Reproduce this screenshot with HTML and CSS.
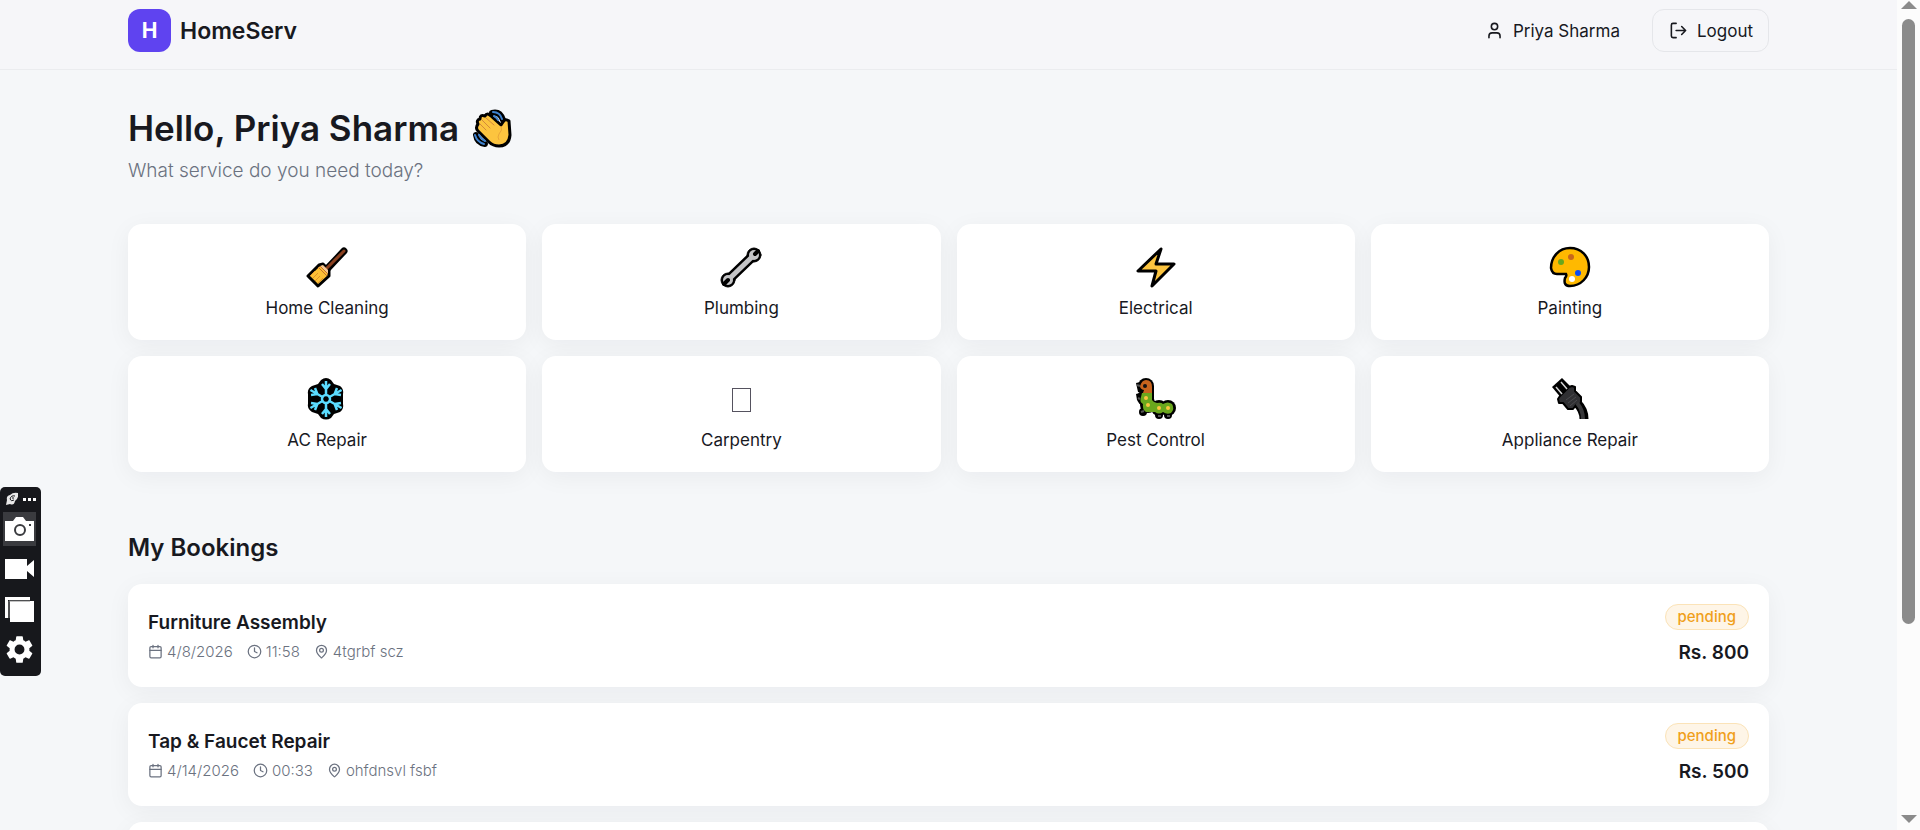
FILE: index.html
```
<!DOCTYPE html>
<html lang="en">
<head>
    <meta charset="UTF-8">
    <meta name="viewport" content="width=device-width, initial-scale=1.0">
    <title>HomeServ - Dashboard</title>
    <link rel="stylesheet" href="styles.css">
</head>
<body>
    <!-- Shared line icons -->
    <svg class="sprite" aria-hidden="true">
        <symbol id="icon-calendar" viewBox="0 0 24 24">
            <path d="M8 2v4M16 2v4M3 10h18"/>
            <rect x="3" y="4" width="18" height="18" rx="2"/>
        </symbol>
        <symbol id="icon-clock" viewBox="0 0 24 24">
            <circle cx="12" cy="12" r="10"/>
            <path d="M12 6v6l4 2"/>
        </symbol>
        <symbol id="icon-pin" viewBox="0 0 24 24">
            <path d="M20 10c0 5-5.500 10.200-7.400 11.800a1 1 0 0 1-1.200 0C9.500 20.200 4 15 4 10a8 8 0 0 1 16 0"/>
            <circle cx="12" cy="10" r="3"/>
        </symbol>
    </svg>

    <div class="page">
        <header class="header">
            <a href="#" class="brand">
                <span class="brand-logo">H</span>
                <span class="brand-name">HomeServ</span>
            </a>
            <div class="user-nav">
                <a href="#" class="user-link">
                    <svg class="nav-icon" viewBox="0 0 24 24"><path d="M19 21v-2a4 4 0 0 0-4-4H9a4 4 0 0 0-4 4v2"/><circle cx="12" cy="7" r="4"/></svg>
                    Priya Sharma
                </a>
                <button type="button" class="btn-logout">
                    <svg class="nav-icon" viewBox="0 0 24 24"><path d="M9 21H5a2 2 0 0 1-2-2V5a2 2 0 0 1 2-2h4M16 17l5-5-5-5M21 12H9"/></svg>
                    Logout
                </button>
            </div>
        </header>

        <main class="container">
            <h1>
                Hello, Priya Sharma
                <svg class="wave" viewBox="0 0 40 40" role="img" aria-label="waving hand">
                    <path d="M19 5Q27 3 30 12M3 27Q4 35 12 36" fill="none" stroke="#000" stroke-width="6" stroke-linecap="round"/>
                    <path d="M5 16Q3 12 7 11Q7 6 12 8Q14 4 18 8L28 17L30 14Q32 10 36 13L37 27Q36 38 26 38Q20 38 16 34L5 23Q2 20 5 16Z" fill="#fcc43f" stroke="#000" stroke-width="3" stroke-linejoin="round"/>
                    <path d="M7 16L13 22M9 12L17 20M13 10L21 17" fill="none" stroke="#d4883b" stroke-width="1" stroke-linecap="round"/>
                    <path d="M28 18Q30 22 26 26Q24 29 26 32" fill="none" stroke="#e9a538" stroke-width="1"/>
                    <path d="M20 4Q27 4 29 11M21 8Q24 9 25 12M2 27Q4 34 11 36M6 27Q8 31 12 33" fill="none" stroke="#3e82cf" stroke-width="2" stroke-linecap="round"/>
                </svg>
            </h1>
            <p class="subtitle">What service do you need today?</p>

            <div class="services">
                <button type="button" class="service-card">
                    <svg class="service-icon" viewBox="0 0 42 42">
                        <path d="M38 5L21 23" stroke="#000" stroke-width="7" stroke-linecap="round"/>
                        <path d="M13 19L17 18L23 24L23 30L12 40L2 30Z" fill="#fcbf35" stroke="#000" stroke-width="3" stroke-linejoin="round"/>
                        <path d="M38 5L21 22" stroke="#8a4020" stroke-width="3" stroke-linecap="round"/>
                        <path d="M14 20L17 19L22 24L22 28Z" fill="#f6c993"/>
                        <path d="M12 21L21 30M14 20L22 28" stroke="#c5702d" stroke-width="1"/>
                        <path d="M9 25L4 30M12 27L7 32M14 30L9 35M17 32L12 37" stroke="#e0922a" stroke-width="1"/>
                    </svg>
                    <span>Home Cleaning</span>
                </button>
                <button type="button" class="service-card">
                    <svg class="service-icon" viewBox="0 0 42 42">
                        <g stroke="#000" stroke-linecap="round">
                            <circle cx="34" cy="9" r="7" fill="#000"/>
                            <circle cx="8" cy="34" r="7" fill="#000"/>
                            <path d="M33 10L9 33" stroke-width="10"/>
                        </g>
                        <circle cx="34" cy="9" r="5" fill="#c4c4c6"/>
                        <circle cx="8" cy="34" r="5" fill="#c4c4c6"/>
                        <path d="M33 10L9 33" stroke="#c4c4c6" stroke-width="5"/>
                        <path d="M38 5L35 8M4 38L8 34" stroke="#000" stroke-width="4" stroke-linecap="round"/>
                    </svg>
                    <span>Plumbing</span>
                </button>
                <button type="button" class="service-card">
                    <svg class="service-icon" viewBox="0 0 42 42">
                        <path d="M26 3L3 25H21L17 40L39 18H21Z" fill="#fcc43f" stroke="#000" stroke-width="3" stroke-linejoin="round"/>
                    </svg>
                    <span>Electrical</span>
                </button>
                <button type="button" class="service-card">
                    <svg class="service-icon" viewBox="0 0 42 42">
                        <path d="M21 2C10 2 2 11 2 22Q3 28 8 28H17Q18 30 16 32Q14 40 21 40C32 40 40 31 40 21C40 10 32 2 21 2Z" fill="#ffb900" stroke="#000" stroke-width="2.500"/>
                        <circle cx="22" cy="11" r="3" fill="#c8681c"/>
                        <circle cx="12" cy="16" r="3" fill="#6aa71d"/>
                        <circle cx="29" cy="27" r="3" fill="#0a4cf5"/>
                        <circle cx="23" cy="33" r="3" fill="#fff"/>
                    </svg>
                    <span>Painting</span>
                </button>
                <button type="button" class="service-card">
                    <svg class="service-icon" viewBox="0 0 42 42">
                        <path d="M15 2Q20 -2 25 2L28 6L34 8Q38 11 37 16V26Q38 31 34 34L28 36L25 40Q20 43 15 40L12 36L6 34Q1 31 2 26V16Q1 11 6 8L12 6Z" fill="#000"/>
                        <g fill="none" stroke="#5bdcff" stroke-width="2.500">
                            <path id="flake-arm" d="M20 18V3M16 6L20 11L24 6"/>
                            <use href="#flake-arm" transform="rotate(60 20 21)"/>
                            <use href="#flake-arm" transform="rotate(120 20 21)"/>
                            <use href="#flake-arm" transform="rotate(180 20 21)"/>
                            <use href="#flake-arm" transform="rotate(240 20 21)"/>
                            <use href="#flake-arm" transform="rotate(300 20 21)"/>
                            <circle cx="20" cy="21" r="4"/>
                        </g>
                    </svg>
                    <span>AC Repair</span>
                </button>
                <button type="button" class="service-card">
                    <svg class="service-icon" viewBox="0 0 42 42">
                        <rect x="12.500" y="10.500" width="18" height="23" fill="none" stroke="#55525f"/>
                    </svg>
                    <span>Carpentry</span>
                </button>
                <button type="button" class="service-card">
                    <svg class="service-icon" viewBox="0 0 42 42">
                        <g fill="#000">
                            <circle cx="11" cy="8" r="8"/>
                            <path d="M1 5L10 3V14H3ZM11 8H19V24H11ZM1 16L8 14V26L2 22Z"/>
                            <circle cx="10" cy="20" r="8"/>
                            <circle cx="13" cy="27" r="8"/>
                            <circle cx="24" cy="30" r="8"/>
                            <circle cx="33" cy="30" r="8"/>
                            <circle cx="8" cy="34" r="4"/>
                            <circle cx="24" cy="37" r="4"/>
                            <circle cx="33" cy="37" r="4"/>
                        </g>
                        <path d="M11 2Q17 2 17 9V15H8L9 12Q5 11 5 8Q7 2 11 2Z" fill="#c8641d"/>
                        <path d="M7 15H17V22Q19 25 22 25Q26 24 28 26Q33 23 37 26Q40 31 36 35Q32 37 28 34Q24 37 20 34H11Q7 31 8 26Q4 24 6 19Z" fill="#6aa71d"/>
                        <circle cx="10" cy="8" r="2" fill="#111"/>
                        <path d="M2 7L5 8M3 20L5 21M6 34L9 33M23 38H26M32 38H35" stroke="#555" stroke-width="2"/>
                        <g fill="#fcc43f">
                            <circle cx="11" cy="20" r="2"/>
                            <circle cx="13" cy="27" r="2"/>
                            <circle cx="24" cy="30" r="2"/>
                            <circle cx="33" cy="30" r="2"/>
                        </g>
                    </svg>
                    <span>Pest Control</span>
                </button>
                <button type="button" class="service-card">
                    <svg class="service-icon" viewBox="0 0 42 42">
                        <path d="M28 25Q35 32 35 41" fill="none" stroke="#000" stroke-width="9"/>
                        <path d="M13 0L3 9L13 21L23 10Z" fill="#000"/>
                        <path d="M20 9L23 8L26 9V13L32 19V25L27 27L24 31H19L14 25H10L9 21L11 18Z" fill="#303033" stroke="#000" stroke-width="2" stroke-linejoin="round"/>
                        <path d="M28 25Q34 32 34 41" fill="none" stroke="#38383a" stroke-width="4"/>
                        <path d="M12 4L18 11M7 9L13 16" stroke="#d4d4d4" stroke-width="1.500"/>
                        <path d="M17 22L25 16M19 25L27 19M21 28L28 22" stroke="#4b4b4e" stroke-width="1"/>
                    </svg>
                    <span>Appliance Repair</span>
                </button>
            </div>

            <h2>My Bookings</h2>
            <div class="bookings">
                <article class="booking-card">
                    <div class="booking-info">
                        <h3>Furniture Assembly</h3>
                        <div class="booking-meta">
                            <span><svg><use href="#icon-calendar"/></svg>4/8/2026</span>
                            <span><svg><use href="#icon-clock"/></svg>11:58</span>
                            <span><svg><use href="#icon-pin"/></svg>4tgrbf scz</span>
                        </div>
                    </div>
                    <div class="booking-side">
                        <span class="badge">pending</span>
                        <span class="price">Rs. 800</span>
                    </div>
                </article>
                <article class="booking-card">
                    <div class="booking-info">
                        <h3>Tap &amp; Faucet Repair</h3>
                        <div class="booking-meta">
                            <span><svg><use href="#icon-calendar"/></svg>4/14/2026</span>
                            <span><svg><use href="#icon-clock"/></svg>00:33</span>
                            <span><svg><use href="#icon-pin"/></svg>ohfdnsvl fsbf</span>
                        </div>
                    </div>
                    <div class="booking-side">
                        <span class="badge">pending</span>
                        <span class="price">Rs. 500</span>
                    </div>
                </article>
                <article class="booking-card booking-next"></article>
            </div>
        </main>
    </div>

    <div class="scrollbar" aria-hidden="true">
        <span class="arrow arrow-up"></span>
        <span class="track"><span class="thumb"></span></span>
        <span class="arrow arrow-down"></span>
    </div>

    <!-- Floating capture toolbar -->
    <aside class="toolbar">
        <div class="toolbar-top">
            <svg width="12" height="14" viewBox="0 0 12 14"><path d="M12 1Q7 0 4 3Q0 4 1 8L0 13L4 12Q8 14 9 9Q13 6 12 1Z" fill="#e8e8e8"/><path d="M9 4Q5 3 4 7Q5 10 8 8M6 6H8" fill="none" stroke="#17181c"/></svg>
            <svg width="13" height="4" viewBox="0 0 13 4"><path d="M0 1H3V4H0ZM5 1H8V4H5ZM10 1H13V4H10Z" fill="#fff"/></svg>
        </div>
        <button type="button" class="tool active" aria-label="Screenshot">
            <svg width="29" height="24" viewBox="0 0 29 24"><path d="M0 4H8L11 0H18L21 4H29V24H0Z" fill="#fff"/><circle cx="15" cy="13" r="5" fill="#fff" stroke="#3a3b3f" stroke-width="2"/><path d="M24 7H26V9H24Z" fill="#3a3b3f"/></svg>
        </button>
        <button type="button" class="tool" aria-label="Record video">
            <svg width="29" height="20" viewBox="0 0 29 20"><path d="M0 0H22V7L29 1V18L22 12V20H0Z" fill="#fff"/></svg>
        </button>
        <button type="button" class="tool" aria-label="Gallery">
            <svg width="29" height="25" viewBox="0 0 29 25"><path d="M0 0H25V3H3V21H0ZM5 4H29V25H5Z" fill="#fff"/><path d="M4 21V4H25" fill="none" stroke="#888"/></svg>
        </button>
        <button type="button" class="tool" aria-label="Settings">
            <svg width="35" height="35" viewBox="0 0 24 24"><path fill="#fff" d="M19.140 12.940c.04-.3.06-.61.06-.94 0-.32-.02-.64-.07-.94l2.030-1.580c.18-.14.23-.41.12-.61l-1.920-3.320c-.12-.22-.37-.29-.59-.22l-2.390.96c-.5-.38-1.030-.7-1.620-.94l-.36-2.540c-.04-.24-.24-.41-.48-.41h-3.840c-.24 0-.43.17-.47.41l-.36 2.540c-.59.24-1.130.57-1.620.94l-2.390-.96c-.22-.08-.47 0-.59.22L2.740 8.870c-.12.21-.08.47.12.61l2.030 1.580c-.05.3-.09.63-.09.94s.02.64.07.94l-2.030 1.580c-.18.14-.23.41-.12.61l1.920 3.320c.12.22.37.29.59.22l2.390-.96c.5.38 1.030.7 1.620.94l.36 2.540c.05.24.24.41.48.41h3.840c.24 0 .44-.17.47-.41l.36-2.540c.59-.24 1.130-.56 1.620-.94l2.390.96c.22.08.47 0 .59-.22l1.920-3.320c.12-.22.07-.47-.12-.61zM12 15.600a3.600 3.600 0 1 1 0-7.200 3.600 3.600 0 0 1 0 7.200z"/></svg>
        </button>
    </aside>
</body>
</html>
```

FILE: styles.css
```
* {
    margin: 0;
    padding: 0;
    box-sizing: border-box;
}

body {
    display: flex;
    height: 100vh;
    overflow: hidden;
    font-family: 'Inter', sans-serif;
    font-size: 17px;
    color: #18191f;
    background: #f5f7f9;
}

a {
    color: inherit;
    text-decoration: none;
}

button {
    font: inherit;
    color: inherit;
    border: none;
    background: none;
    cursor: pointer;
}

.sprite {
    position: absolute;
    width: 0;
    height: 0;
}

.page {
    flex: 1;
    min-width: 0;
    overflow: hidden;
}

/* Header */
.header {
    display: flex;
    align-items: center;
    justify-content: space-between;
    padding: 9px 128px 17px;
    background: #f6f6f9;
    border-bottom: 1px solid #ebecef;
}

.brand {
    display: flex;
    align-items: center;
    gap: 9px;
}

.brand-logo {
    display: flex;
    align-items: center;
    justify-content: center;
    width: 43px;
    height: 43px;
    border-radius: 12px;
    background: #5f43f0;
    color: white;
    font-size: 21px;
    font-weight: 700;
}

.brand-name {
    font-size: 23px;
    font-weight: 600;
}

.user-nav {
    display: flex;
    align-items: center;
    gap: 32px;
}

.user-link,
.btn-logout {
    display: flex;
    align-items: center;
    gap: 9px;
    line-height: 24px;
}

.btn-logout {
    height: 43px;
    padding: 0 15px 0 16px;
    border: 1px solid #e5e6ea;
    border-radius: 12px;
}

.nav-icon {
    width: 19px;
    height: 19px;
    fill: none;
    stroke: currentColor;
    stroke-width: 2;
    stroke-linecap: round;
    stroke-linejoin: round;
}

/* Content */
.container {
    padding: 36px 128px;
}

h1 {
    display: flex;
    align-items: center;
    gap: 14px;
    font-size: 35px;
    line-height: 44px;
    font-weight: 600;
}

.wave {
    width: 40px;
    height: 40px;
}

.subtitle {
    margin: 6px 0 38px;
    font-size: 19px;
    line-height: 30px;
    font-weight: 300;
    color: #6b7280;
}

.services {
    display: grid;
    grid-template-columns: repeat(4, 1fr);
    gap: 16px;
}

.service-card,
.booking-card {
    background: white;
    border-radius: 14px;
    box-shadow: 0 5px 25px rgba(20, 22, 40, 0.05);
}

.service-card {
    display: flex;
    flex-direction: column;
    align-items: center;
    gap: 8px;
    padding: 22px 20px 20px;
    line-height: 24px;
}

.service-icon {
    width: 42px;
    height: 42px;
    fill: none;
}

h2 {
    margin: 60px 0 20px;
    font-size: 24px;
    line-height: 32px;
    font-weight: 600;
}

/* Bookings */
.bookings {
    display: flex;
    flex-direction: column;
    gap: 16px;
}

.booking-card {
    display: flex;
    align-items: center;
    justify-content: space-between;
    padding: 20px;
}

.booking-next {
    min-height: 103px;
}

h3,
.price {
    font-size: 19px;
    line-height: 28px;
    font-weight: 600;
}

.booking-meta {
    display: flex;
    gap: 14px;
    margin-top: 4px;
    font-size: 15px;
    line-height: 22px;
    font-weight: 300;
    color: #6b7280;
}

.booking-meta span {
    display: flex;
    align-items: center;
    gap: 4px;
}

.booking-meta svg {
    width: 15px;
    height: 15px;
    fill: none;
    stroke: currentColor;
    stroke-width: 2;
    stroke-linecap: round;
    stroke-linejoin: round;
}

.booking-side {
    display: flex;
    flex-direction: column;
    align-items: flex-end;
    gap: 9px;
}

.badge {
    padding: 0 12px;
    border: 1px solid #fbe3b8;
    border-radius: 13px;
    background: #fef5e7;
    color: #f0a01c;
    font-size: 15px;
    line-height: 24px;
    font-weight: 500;
}

/* Scrollbar */
.scrollbar {
    display: flex;
    flex-direction: column;
    align-items: center;
    width: 23px;
    padding: 1px 0 7px;
    background: #fcfcfc;
}

.arrow {
    border: 8px solid transparent;
}

.arrow-up {
    border-top: none;
    border-bottom-color: #8b8b8b;
}

.arrow-down {
    border-bottom: none;
    border-top-color: #8b8b8b;
}

.track {
    flex: 1;
    width: 13px;
    padding: 10px 0;
}

.thumb {
    display: block;
    height: 77%;
    border-radius: 7px;
    background: #8b8b8b;
}

/* Capture toolbar */
.toolbar {
    position: fixed;
    left: 0;
    bottom: 154px;
    display: flex;
    flex-direction: column;
    gap: 6px;
    width: 41px;
    padding: 5px 5px 10px 3px;
    border-radius: 5px;
    background: #17181c;
}

.toolbar-top {
    display: flex;
    align-items: center;
    gap: 5px;
    height: 14px;
    padding-left: 3px;
}

.tool {
    display: flex;
    align-items: center;
    justify-content: center;
    width: 33px;
    height: 34px;
}

.tool.active {
    background: #3a3b3f;
}
```
